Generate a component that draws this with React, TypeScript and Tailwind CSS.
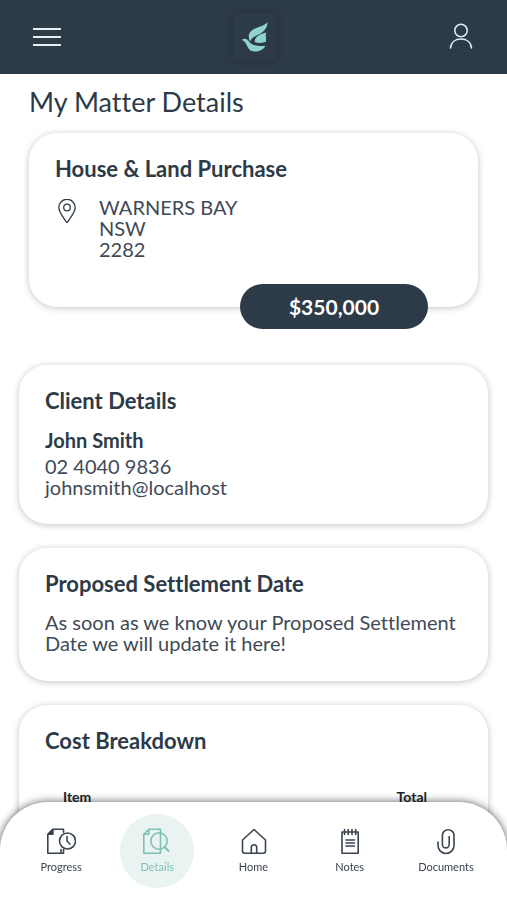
import type { ReactNode } from 'react'
import clsx from 'clsx'

// ── Icons ──────────────────────────────────────────────────────────────────────
function Icon({ className, box = 28, children }: { className?: string; box?: number; children: ReactNode }) {
  return (
    <svg
      viewBox={`0 0 ${box} ${box}`}
      fill="none"
      stroke="currentColor"
      strokeWidth={1.6}
      strokeLinecap="round"
      strokeLinejoin="round"
      className={className}
      aria-hidden="true"
    >
      {children}
    </svg>
  )
}

const ProgressIcon = (
  <>
    <path d="M14 21.5V25.2H.8V6.2L5.8 1.2H16.5V4.2M.8 6.2H5.8V1.2M16.5 21.5V25.2H13" />
    <path d="M1.5 6 5.6 1.8V6Z" fill="currentColor" />
    <circle cx="20.5" cy="13" r="8" />
    <path d="M20 8.5V13L23 16" />
  </>
)

const DetailsIcon = (
  <>
    <path d="M.8 6.2 5.8 1.2H17.5V25.2H.8ZM.8 6.2H5.8V1.2" />
    <circle cx="16" cy="13" r="8.2" />
    <path d="M21.6 19 25.6 23" strokeWidth={2} />
  </>
)

const HomeIcon = (
  <>
    <path d="M2.5 12 14 1.5 25.5 12V23a2.2 2.2 0 0 1-2.2 2.2H4.7A2.2 2.2 0 0 1 2.5 23Z" />
    <path d="M11.3 25V19.5a2.7 2.7 0 0 1 5.4 0V25" />
  </>
)

const NotesIcon = (
  <>
    <path d="M6 4H22.2V25.2H6Z" />
    <path d="M8.5 1.5V6.5M12.2 1.5V6.5M16 1.5V6.5M19.7 1.5V6.5" />
    <path d="M10 12H18.5M10 15H18.5M10 18H18.5" />
  </>
)

const DocumentsIcon = (
  <path d="M6 14V17.5a8 8 0 0 0 16 0V7.5a5.8 5.8 0 0 0-11.6 0V16.500a3.400 3.400 0 0 0 6.800 0V8.500" />
)

const NAV_ITEMS = [
  { label: 'Progress', icon: ProgressIcon },
  { label: 'Details', icon: DetailsIcon },
  { label: 'Home', icon: HomeIcon },
  { label: 'Notes', icon: NotesIcon },
  { label: 'Documents', icon: DocumentsIcon },
]

function Logo() {
  return (
    <a href="#home" aria-label="Home" className="rounded-sm p-2 shadow-[0_0_10px_rgba(0,0,0,0.18)]">
      <svg viewBox="0 0 28 32" className="h-8 w-7 fill-[#8fd3cb]" aria-hidden="true">
        <path d="M9 20.500C6.500 15 7.500 11 13 8 18 5.500 23 5 26.500 1.200 26.500 6 24 9.500 19.500 12.500 15 15 11 16 9 20.500Z" />
        <path d="M13.500 21C14 16 18 13 25.200 11.500 24.200 15 25.500 17.500 25 20.500 21 22.500 17 22 13.500 21Z" />
        <path d="M.8 19C3 17 5.500 17.500 7.500 20 11 24.500 16 25.500 24.500 25 22 29 17 31 13 30.500 7.500 30 6.500 25 4.500 22 3.500 20.500 2.500 19.500.8 19Z" />
      </svg>
    </a>
  )
}

// ── Cards ──────────────────────────────────────────────────────────────────────
function Card({ title, className, children }: { title: string; className?: string; children: ReactNode }) {
  return (
    <section className={clsx('rounded-[28px] bg-white px-[26px] pt-5 shadow-[0_1px_7px_rgba(0,0,0,0.24)]', className)}>
      <h2 className="text-[22px] leading-8 font-bold">{title}</h2>
      {children}
    </section>
  )
}

export default function App() {
  return (
    <div className="flex h-screen flex-col bg-white font-[Lato,sans-serif] text-[#2d3a48] [font-variant-ligatures:none]">
      <header className="flex h-[74px] shrink-0 items-center justify-between bg-[#2d3a48] px-8">
        <button type="button" aria-label="Menu" className="flex w-[30px] flex-col items-center gap-[6px] text-[#e8f0f4]">
          <span className="h-[2px] w-7 bg-current" />
          <span className="h-[2px] w-7 bg-current" />
          <span className="h-[2px] w-7 bg-current" />
        </button>
        <Logo />
        <button type="button" aria-label="Account" className="text-[#dcebf0]">
          <Icon className="size-7">
            <circle cx="14" cy="7.5" r="6.2" />
            <path d="M3.500 25C4 19 8.500 16 14 16S24 19 24.500 25" />
          </Icon>
        </button>
      </header>

      <main className="flex-1 overflow-y-auto px-[19px] pb-28 [scrollbar-width:none]">
        <h1 className="px-[10px] pt-2 text-[27px] leading-10">My Matter Details</h1>

        <div className="relative mx-[10px] mt-[11px]">
          <Card title="House & Land Purchase" className="pb-[47px]">
            <div className="mt-3 flex gap-5">
              <Icon className="mt-[2px] size-6" box={24}>
                <path strokeWidth={1.3} d="M12 24C8.5 18 3.8 13.5 3.8 8.5a8.2 8.2 0 0 1 16.4 0C20.2 13.5 15.5 18 12 24Z" />
                <circle strokeWidth={1.3} cx="12" cy="8.5" r="3.3" />
              </Icon>
              <address className="text-xl leading-[21px] text-[#3f4a56] not-italic">
                WARNERS BAY<br />NSW<br />2282
              </address>
            </div>
          </Card>
          <p className="absolute right-[50px] -bottom-[22px] w-[188px] rounded-full bg-[#2d3a48] text-center text-[21px] leading-[45px] font-bold text-white">
            $350,000
          </p>
        </div>

        <Card title="Client Details" className="mt-[58px] pb-[26px]">
          <h3 className="mt-2 text-xl leading-[31px] font-bold">John Smith</h3>
          <p className="text-xl leading-[21px] text-[#3f4a56]">02 4040 9836</p>
          <p className="text-xl leading-[21px] text-[#3f4a56]">johnsmith@localhost</p>
        </Card>

        <Card title="Proposed Settlement Date" className="mt-6 pb-[27px]">
          <p className="mt-3 text-xl leading-[21px] text-[#3f4a56]">
            As soon as we know your Proposed Settlement Date we will update it here!
          </p>
        </Card>

        <Card title="Cost Breakdown" className="mt-6 pb-10">
          <table className="mt-7 w-full text-sm text-[#212529]">
            <thead>
              <tr>
                <th className="px-[18px] py-[2px] text-left font-bold">Item</th>
                <th className="px-[35px] py-[2px] text-right font-bold">Total</th>
              </tr>
            </thead>
          </table>
        </Card>
      </main>

      <nav className="fixed inset-x-0 bottom-0 flex h-[98px] items-center justify-between rounded-t-[48px] bg-white px-[13px] shadow-[0_0_8px_rgba(0,0,0,0.65)]">
        {NAV_ITEMS.map(({ label, icon }) => {
          const active = label === 'Details'
          return (
            <a
              key={label}
              href={`#${label.toLowerCase()}`}
              aria-current={active ? 'page' : undefined}
              className="flex flex-1 justify-center"
            >
              <span
                className={clsx(
                  'flex size-[74px] flex-col items-center justify-center gap-[3px] rounded-full text-[11px] leading-4',
                  active ? 'bg-[#e8f3f2] text-[#7fbfb4]' : 'text-[#3a4450]',
                )}
              >
                <Icon className="h-7 w-[30px]">{icon}</Icon>
                {label}
              </span>
            </a>
          )
        })}
      </nav>
    </div>
  )
}
